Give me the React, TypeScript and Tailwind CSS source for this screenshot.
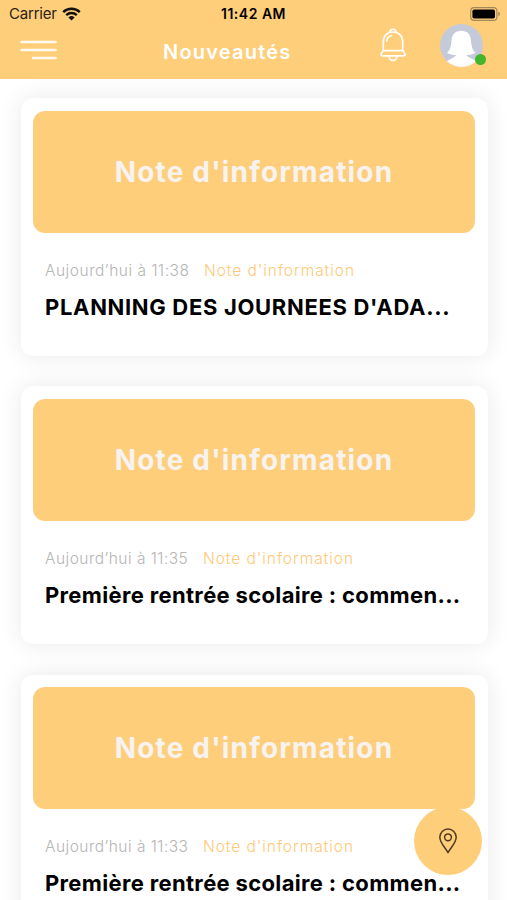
import React from 'react';

interface NewsItem {
  id: number;
  category: string;
  time: string;
  title: string;
  timeClass: string;
  titleClass: string;
}

const news: NewsItem[] = [
  {
    id: 1,
    category: "Note d'information",
    time: 'Aujourd’hui à 11:38',
    title: "PLANNING DES JOURNEES D'ADA...",
    timeClass: 'w-[159px] tracking-[0.53px]',
    titleClass: 'tracking-[0.67px]'
  },
  {
    id: 2,
    category: "Note d'information",
    time: 'Aujourd’hui à 11:35',
    title: 'Première rentrée scolaire : commen...',
    timeClass: 'w-[158px] tracking-[0.48px]',
    titleClass: 'tracking-[0.34px]'
  },
  {
    id: 3,
    category: "Note d'information",
    time: 'Aujourd’hui à 11:33',
    title: 'Première rentrée scolaire : commen...',
    timeClass: 'w-[158px] tracking-[0.48px]',
    titleClass: 'tracking-[0.34px]'
  }
];

function WifiIcon() {
  return (
    <svg width="19" height="14" viewBox="0 0 19 14" fill="none">
      <path d="M1.2 5.1a12 12 0 0 1 16.6 0" stroke="#111" strokeWidth="2.5" />
      <path d="M4.2 8.1a7.7 7.7 0 0 1 10.6 0" stroke="#111" strokeWidth="2.3" />
      <path d="M6.4 10.4a4.5 4.5 0 0 1 6.2 0L9.5 13.6z" fill="#111" />
    </svg>
  );
}

function BatteryIcon() {
  return (
    <svg width="31" height="14" viewBox="0 0 31 14" fill="none">
      <rect x="0.7" y="0.7" width="26.2" height="12.6" rx="3.4" stroke="#a48757" strokeWidth="1.2" />
      <rect x="2.4" y="2.4" width="22.6" height="9.2" rx="1.8" fill="#000" />
      <path d="M28.3 4.8c2.2.6 2.2 3.8 0 4.4z" fill="#a48757" />
    </svg>
  );
}

function MenuIcon() {
  return (
    <svg width="37" height="20" viewBox="0 0 37 20" stroke="#fffaf0" strokeWidth="2.5" strokeLinecap="round">
      <path d="M1.5 2H35.500M1.500 10H35.500M13 18H35.500" />
    </svg>
  );
}

function BellIcon() {
  return (
    <svg width="26" height="34" viewBox="0 0 26 34" fill="none" stroke="#fff" strokeWidth="1.6" strokeLinecap="round" strokeLinejoin="round">
      <path d="M9.900 4.400C9.900 2.400 11 1.200 13 1.200s3.100 1.200 3.100 3.200" />
      <path d="M3.300 22.600V14C3.300 7.800 7.300 4 13 4s9.700 3.800 9.700 10v8.600" />
      <path d="M3.300 22.600h19.400l1.900 2.800c.9 1.500.3 2.500-1.200 2.500H2.600c-1.500 0-2.100-1-1.200-2.500z" />
      <path d="M9 28.300c.4 2.600 1.800 4.100 4 4.100s3.600-1.500 4-4.100" />
      <path d="M6.700 13.300c.2-2.900 1.900-5.100 4.700-5.900" />
    </svg>
  );
}

function Avatar() {
  return (
    <svg width="43" height="43" viewBox="0 0 43 43">
      <defs>
        <clipPath id="avatar-clip">
          <circle cx="21.5" cy="21.5" r="21.5" />
        </clipPath>
      </defs>
      <g clipPath="url(#avatar-clip)">
        <rect width="43" height="43" fill="#c5cada" />
        <path d="M21.200 6.800C15 6.800 12 10.500 11.500 16.500c-.5 6-1.300 9.500-4.500 12.500 3.500 1.700 7 2.100 10 2.100h8.500c3 0 6.500-.4 10-2.100-3.200-3-4-6.500-4.500-12.500C30.500 10.500 27.500 6.800 21.200 6.800z" fill="#fff" />
        <path d="M16.500 30.500c-1.500 3-6 4.300-9.500 6.500v7h29v-7c-3.500-2.200-8.500-3.500-10-6.500z" fill="#fff" />
      </g>
    </svg>
  );
}

function Header() {
  return (
    <header className="h-[79px] bg-[#ffce7b]">
      <div className="flex h-7 items-center justify-between pl-[9px] pr-[6px]">
        <div className="flex w-[160px] items-center gap-[5px]">
          <span className="text-[15px] leading-5 tracking-[-0.2px] text-[#2a2216]">Carrier</span>
          <WifiIcon />
        </div>
        <span className="text-[14px] font-semibold leading-5 tracking-[0.5px] text-black">11:42 AM</span>
        <div className="flex w-[163px] justify-end">
          <BatteryIcon />
        </div>
      </div>
      <div className="flex h-[46px] items-center px-5">
        <button className="-mt-[2px]" aria-label="Menu">
          <MenuIcon />
        </button>
        <h1 className="ml-[106px] mt-[2px] w-[140px] whitespace-nowrap text-[20px] font-semibold leading-6 tracking-[1.2px] text-white">Nouveautés</h1>
        <button className="ml-[77px] -mt-3" aria-label="Notifications">
          <BellIcon />
        </button>
        <div className="relative ml-[34px] -mt-3">
          <Avatar />
          <span className="absolute left-[35px] top-[30px] h-[11px] w-[11px] rounded-full bg-[#41b52b]" />
        </div>
      </div>
    </header>
  );
}

function NewsCard({ item }: { item: NewsItem }) {
  return (
    <article className="h-[258px] shrink-0 rounded-[12px] bg-white p-[12.5px] shadow-[0_0_24px_rgba(0,0,0,0.09)]">
      <div className="flex h-[122px] items-center justify-center rounded-[12px] bg-[#ffce7b]">
        <span className="whitespace-nowrap text-[28px] font-bold leading-8 tracking-[1.17px] text-[#f6f3f1]">{item.category}</span>
      </div>
      <div className="mt-7 flex whitespace-nowrap pl-3 text-[15.5px] font-light leading-5">
        <span className={`${item.timeClass} text-[#b5b5b5]`}>{item.time}</span>
        <span className="tracking-[0.95px] text-[#ffc978]">{item.category}</span>
      </div>
      <h2 className={`${item.titleClass} mt-3 whitespace-nowrap pl-3 text-[22px] font-bold leading-7 text-black`}>{item.title}</h2>
    </article>
  );
}

export default function App() {
  return (
    <div className="relative h-[900px] w-[507px] overflow-hidden bg-white font-['Inter','Liberation_Sans',sans-serif]">
      <Header />
      <main className="flex flex-col gap-[30.3px] pl-[20.5px] pr-[19.5px] pt-[19px]">
        {news.map((item) => (
          <NewsCard key={item.id} item={item} />
        ))}
      </main>
      <button className="absolute left-[414px] top-[807px] flex h-[68px] w-[68px] items-center justify-center rounded-full bg-[#ffce7b]" aria-label="Carte">
        <svg width="20" height="26" viewBox="0 0 20 26" fill="none" stroke="#4e3c20" strokeWidth="1.5" strokeLinejoin="round">
          <path d="M10 24.6C7.5 20 1.8 14.8 1.8 9.3a8.2 8.2 0 0 1 16.4 0C18.2 14.8 12.500 20 10 24.600z" />
          <circle cx="10" cy="9.3" r="3.4" />
        </svg>
      </button>
    </div>
  );
}
